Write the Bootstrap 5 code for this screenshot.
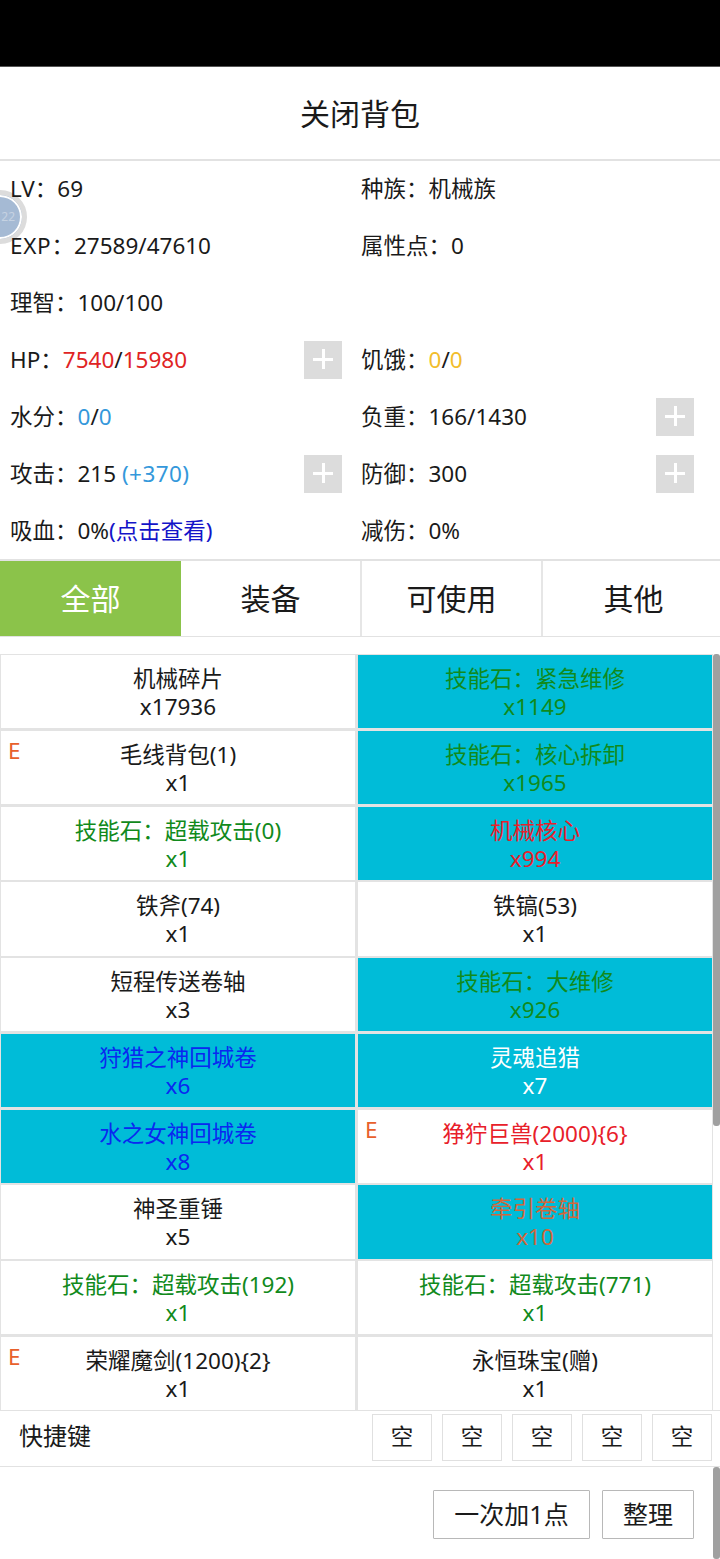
<!DOCTYPE html>
<html lang="zh">
<head>
  <meta charset="UTF-8">
  <meta name="viewport" content="width=device-width, initial-scale=1.0">
  <title>背包</title>
  <link href="https://cdn.jsdelivr.net/npm/bootstrap@5.3.0/dist/css/bootstrap.min.css" rel="stylesheet">
  <style>
    body { font-family: "Noto Sans", "Noto Sans CJK SC", sans-serif; font-size: 22.5px; color: #1a1a1a; background: #fff; height: 1559px; overflow: hidden; position: relative; }
    .top-black { height: 66px; background: #000; border-bottom: 1px solid #555; box-sizing: content-box; }
    .bag-title { height: 94px; font-size: 30px; border-bottom: 2px solid #e2e2e2; }
    .stat-row { height: 57px; padding-bottom: 2px; position: relative; z-index: 2; }
    .stat-cell { padding-left: 10px; padding-right: 18px; }
    .stat-cell.right-side { padding-left: 1px; padding-right: 26px; }
    .stat-key { letter-spacing: .7px; }
    .plus-btn { width: 38px; height: 38px; background: #dcdcdc; position: relative; flex: none; }
    .plus-btn::before, .plus-btn::after { content: ""; position: absolute; background: #fff; left: 9px; top: 17px; width: 20px; height: 3px; }
    .plus-btn::after { left: 18px; top: 8px; width: 3px; height: 20px; }
    .c-red { color: #e02424; }
    .c-blue { color: #3498db; }
    .c-bonus { color: #3498db; letter-spacing: .4px; }
    .c-yellow { color: #f2bd2c; }
    .c-link { color: #1414c8; }
    .tab-bar { height: 78px; margin-top: -1px; border-top: 2px solid #e2e2e2; border-bottom: 1px solid #e2e2e2; font-size: 30px; overflow: hidden; }
    .tab-item { width: 181px; flex: none; border-right: 2px solid #e6e6e6; height: 100%; }
    .tab-item:last-child { border-right: 0; }
    .tab-item.on { background: #8bc34a; color: #fff; border-right: 0; }
    .item-area { margin-top: 17px; height: 756px; overflow: hidden; position: relative; }
    .item-grid { display: grid; grid-template-columns: 354px 354px; gap: 2.5px 3px; padding: 1px 0 1px 1px; background: #e3e3e3; width: 713px; }
    .item-cell { height: 73.28px; background: #fff; text-align: center; line-height: 28px; padding-top: 10px; position: relative; }
    .item-cell.sel { background: #00bcd8; }
    .equip-mark { position: absolute; left: 7px; top: 6px; color: #e8602c; line-height: 28px; }
    .t-green { color: #118a1c; }
    .t-red { color: #e8202a; }
    .t-blue { color: #0a28f0; }
    .t-brown { color: #d0683c; }
    .t-white { color: #fff; }
    .scroll-thumb { position: absolute; right: 0; width: 7px; background: #a0a0a0; border-radius: 3px; }
    .quick-bar { height: 57px; border-top: 1px solid #e2e2e2; border-bottom: 1px solid #e2e2e2; padding: 0 8px 3px 19px; }
    .quick-label { font-size: 24px; margin-bottom: 2px; }
    .quick-list { gap: 10px; }
    .quick-btn { width: 60px; height: 47px; border: 1px solid #e0e0e0; }
    .bottom-bar { padding: 23px 26px 0 0; gap: 12px; }
    .bottom-bar .btn { font-size: 25px; height: 49px; border: 1px solid #b8b8b8; border-radius: 1px; color: #1a1a1a; padding: 0; }
    .btn-once { width: 157px; }
    .btn-sort { width: 92px; }
    .float-ball { position: absolute; z-index: 1; left: -27px; top: 190px; width: 54px; height: 54px; border-radius: 50%; background: #a5bad4; border: 5px solid #dcdcdc; box-shadow: inset 0 0 0 2px #fff; color: #c5d2e2; font-size: 12px; text-align: right; line-height: 44px; padding-right: 7px; }
  </style>
</head>
<body>
  <div class="top-black"></div>
  <div class="bag-title d-flex align-items-center justify-content-center">关闭背包</div>

  <div class="row g-0 stat-row align-items-center">
    <div class="col-6 stat-cell">LV：69</div>
    <div class="col-6 stat-cell right-side">种族：机械族</div>
  </div>
  <div class="row g-0 stat-row align-items-center">
    <div class="col-6 stat-cell"><span class="stat-key">EXP</span>：27589/47610</div>
    <div class="col-6 stat-cell right-side">属性点：0</div>
  </div>
  <div class="row g-0 stat-row align-items-center">
    <div class="col-6 stat-cell">理智：100/100</div>
  </div>
  <div class="row g-0 stat-row align-items-center">
    <div class="col-6 stat-cell d-flex justify-content-between align-items-center"><span>HP：<span class="c-red">7540</span>/<span class="c-red">15980</span></span><span class="plus-btn"></span></div>
    <div class="col-6 stat-cell right-side">饥饿：<span class="c-yellow">0</span>/<span class="c-yellow">0</span></div>
  </div>
  <div class="row g-0 stat-row align-items-center">
    <div class="col-6 stat-cell">水分：<span class="c-blue">0</span>/<span class="c-blue">0</span></div>
    <div class="col-6 stat-cell right-side d-flex justify-content-between align-items-center"><span>负重：166/1430</span><span class="plus-btn"></span></div>
  </div>
  <div class="row g-0 stat-row align-items-center">
    <div class="col-6 stat-cell d-flex justify-content-between align-items-center"><span>攻击：215 <span class="c-bonus">(+370)</span></span><span class="plus-btn"></span></div>
    <div class="col-6 stat-cell right-side d-flex justify-content-between align-items-center"><span>防御：300</span><span class="plus-btn"></span></div>
  </div>
  <div class="row g-0 stat-row align-items-center">
    <div class="col-6 stat-cell">吸血：0%<span class="c-link">(点击查看)</span></div>
    <div class="col-6 stat-cell right-side">减伤：0%</div>
  </div>

  <div class="d-flex tab-bar text-center">
    <div class="tab-item on d-flex align-items-center justify-content-center">全部</div>
    <div class="tab-item d-flex align-items-center justify-content-center">装备</div>
    <div class="tab-item d-flex align-items-center justify-content-center">可使用</div>
    <div class="tab-item d-flex align-items-center justify-content-center">其他</div>
  </div>

  <div class="item-area">
    <div class="item-grid">
      <div class="item-cell">机械碎片<br>x17936</div>
      <div class="item-cell sel t-green">技能石：紧急维修<br>x1149</div>
      <div class="item-cell"><span class="equip-mark">E</span>毛线背包(1)<br>x1</div>
      <div class="item-cell sel t-green">技能石：核心拆卸<br>x1965</div>
      <div class="item-cell t-green">技能石：超载攻击(0)<br>x1</div>
      <div class="item-cell sel t-red">机械核心<br>x994</div>
      <div class="item-cell">铁斧(74)<br>x1</div>
      <div class="item-cell">铁镐(53)<br>x1</div>
      <div class="item-cell">短程传送卷轴<br>x3</div>
      <div class="item-cell sel t-green">技能石：大维修<br>x926</div>
      <div class="item-cell sel t-blue">狩猎之神回城卷<br>x6</div>
      <div class="item-cell sel t-white">灵魂追猎<br>x7</div>
      <div class="item-cell sel t-blue">水之女神回城卷<br>x8</div>
      <div class="item-cell t-red"><span class="equip-mark">E</span>狰狞巨兽(2000){6}<br>x1</div>
      <div class="item-cell">神圣重锤<br>x5</div>
      <div class="item-cell sel t-brown">牵引卷轴<br>x10</div>
      <div class="item-cell t-green">技能石：超载攻击(192)<br>x1</div>
      <div class="item-cell t-green">技能石：超载攻击(771)<br>x1</div>
      <div class="item-cell"><span class="equip-mark">E</span>荣耀魔剑(1200){2}<br>x1</div>
      <div class="item-cell">永恒珠宝(赠)<br>x1</div>
    </div>
    <div class="scroll-thumb top-0" style="height: 472px"></div>
  </div>

  <div class="quick-bar d-flex align-items-center justify-content-between">
    <span class="quick-label">快捷键</span>
    <div class="d-flex quick-list">
      <div class="quick-btn d-flex align-items-center justify-content-center">空</div>
      <div class="quick-btn d-flex align-items-center justify-content-center">空</div>
      <div class="quick-btn d-flex align-items-center justify-content-center">空</div>
      <div class="quick-btn d-flex align-items-center justify-content-center">空</div>
      <div class="quick-btn d-flex align-items-center justify-content-center">空</div>
    </div>
  </div>

  <div class="bottom-bar d-flex justify-content-end">
    <button class="btn btn-once" type="button">一次加1点</button>
    <button class="btn btn-sort" type="button">整理</button>
  </div>
  <div class="scroll-thumb bottom-0" style="height: 92px"></div>

  <div class="float-ball">22</div>

  <script src="https://cdn.jsdelivr.net/npm/bootstrap@5.3.0/dist/js/bootstrap.bundle.min.js"></script>
</body>
</html>
